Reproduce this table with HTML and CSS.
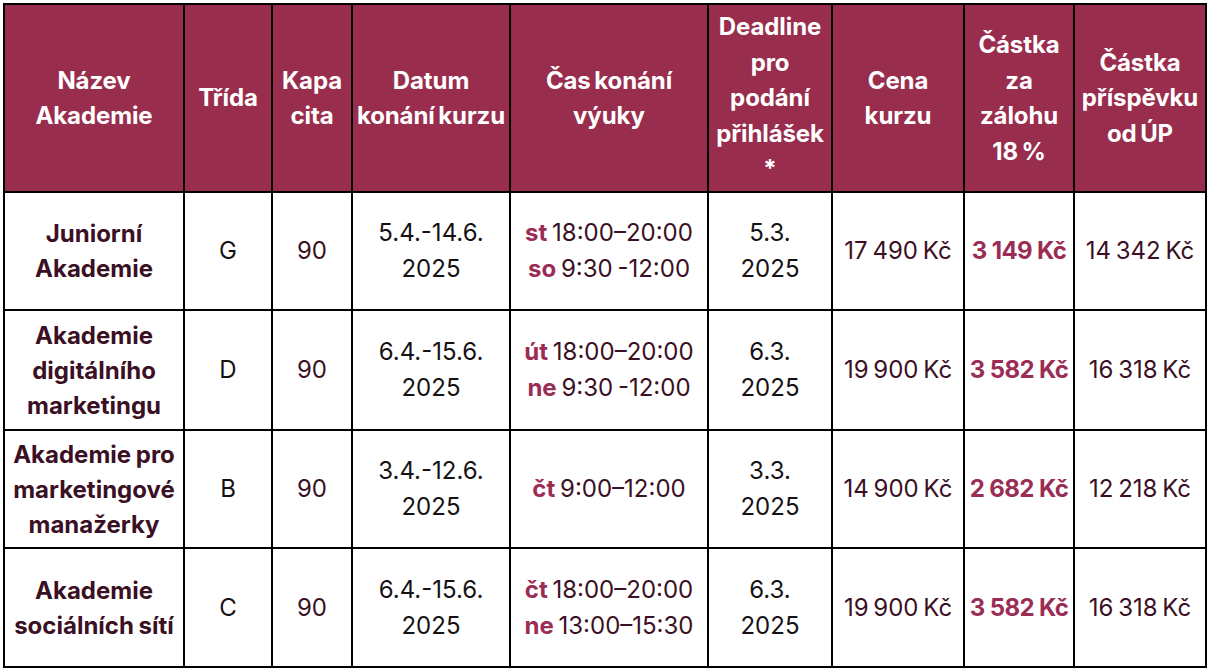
FILE: index.html
```html
<!DOCTYPE html>
<html lang="cs">
<head>
<meta charset="utf-8">
<title>Akademie</title>
<link rel="stylesheet" href="styles.css">
</head>
<body>
<table class="tbl">
  <colgroup>
    <col class="c1"><col class="c2"><col class="c3"><col class="c4"><col class="c5"><col class="c6"><col class="c7"><col class="c8"><col class="c9">
  </colgroup>
  <thead>
    <tr class="head">
      <th>Název<br>Akademie</th>
      <th>Třída</th>
      <th>Kapa<br>cita</th>
      <th>Datum<br>konání kurzu</th>
      <th>Čas konání<br>výuky</th>
      <th>Deadline<br>pro<br>podání<br>přihlášek<br>*</th>
      <th>Cena<br>kurzu</th>
      <th>Částka<br>za<br>zálohu<br>18 %</th>
      <th>Částka<br>příspěvku<br>od ÚP</th>
    </tr>
  </thead>
  <tbody>
    <tr class="r1">
      <td class="name">Juniorní<br>Akademie</td>
      <td class="cls">G</td>
      <td class="num">90</td>
      <td class="date">5.4.-14.6.<br>2025</td>
      <td class="time"><b>st</b> 18:00–20:00<br><b>so</b> 9:30 -12:00</td>
      <td class="date">5.3.<br>2025</td>
      <td class="price">17 490 Kč</td>
      <td class="dep">3 149 Kč</td>
      <td class="price">14 342 Kč</td>
    </tr>
    <tr class="r2">
      <td class="name">Akademie<br>digitálního<br>marketingu</td>
      <td class="cls">D</td>
      <td class="num">90</td>
      <td class="date">6.4.-15.6.<br>2025</td>
      <td class="time"><b>út</b> 18:00–20:00<br><b>ne</b> 9:30 -12:00</td>
      <td class="date">6.3.<br>2025</td>
      <td class="price">19 900 Kč</td>
      <td class="dep">3 582 Kč</td>
      <td class="price">16 318 Kč</td>
    </tr>
    <tr class="r3">
      <td class="name">Akademie pro<br>marketingové<br>manažerky</td>
      <td class="cls">B</td>
      <td class="num">90</td>
      <td class="date">3.4.-12.6.<br>2025</td>
      <td class="time"><b>čt</b> 9:00–12:00</td>
      <td class="date">3.3.<br>2025</td>
      <td class="price">14 900 Kč</td>
      <td class="dep">2 682 Kč</td>
      <td class="price">12 218 Kč</td>
    </tr>
    <tr class="r4">
      <td class="name">Akademie<br>sociálních sítí</td>
      <td class="cls">C</td>
      <td class="num">90</td>
      <td class="date">6.4.-15.6.<br>2025</td>
      <td class="time"><b>čt</b> 18:00–20:00<br><b>ne</b> 13:00–15:30</td>
      <td class="date">6.3.<br>2025</td>
      <td class="price">19 900 Kč</td>
      <td class="dep">3 582 Kč</td>
      <td class="price">16 318 Kč</td>
    </tr>
  </tbody>
</table>
</body>
</html>
```

FILE: styles.css
```css
html, body {
  margin: 0;
  padding: 0;
  background: #ffffff;
}

body {
  padding: 3px 1px 0 3px;
  font-family: "Inter", "Liberation Sans", sans-serif;
}

.tbl {
  border-collapse: collapse;
  table-layout: fixed;
  width: 1204px;
  border: 2px solid #000;
}

.c1 { width: 180px; }
.c2 { width: 88px; }
.c3 { width: 80px; }
.c4 { width: 158px; }
.c5 { width: 198px; }
.c6 { width: 124px; }
.c7 { width: 132px; }
.c8 { width: 110px; }
.c9 { width: 132px; }

.tbl th,
.tbl td {
  border: 2px solid #000;
  padding: 0;
  text-align: center;
  vertical-align: middle;
  white-space: nowrap;
}

.head {
  height: 188px;
}

.tbl th {
  background: #992d4d;
  color: #ffffff;
  font-weight: 700;
  font-size: 24px;
  line-height: 35.5px;
  letter-spacing: -0.1px;
  word-spacing: -2px;
}

.r1 { height: 118px; }
.r2 { height: 120px; }
.r3 { height: 118px; }
.r4 { height: 119px; }

.tbl td {
  font-size: 24px;
  line-height: 36px;
  color: #3b1024;
  font-weight: 400;
  letter-spacing: 0;
  word-spacing: -2px;
}

.tbl td.name {
  font-weight: 700;
  line-height: 35px;
  color: #3b1024;
  word-spacing: -1px;
}

.tbl td.cls,
.tbl td.date {
  color: #161214;
}

.tbl td.time b {
  font-weight: 700;
  color: #9b2d55;
}

.tbl td.dep {
  font-weight: 700;
  color: #9b2d55;
  letter-spacing: -0.6px;
  word-spacing: 0;
}
```
